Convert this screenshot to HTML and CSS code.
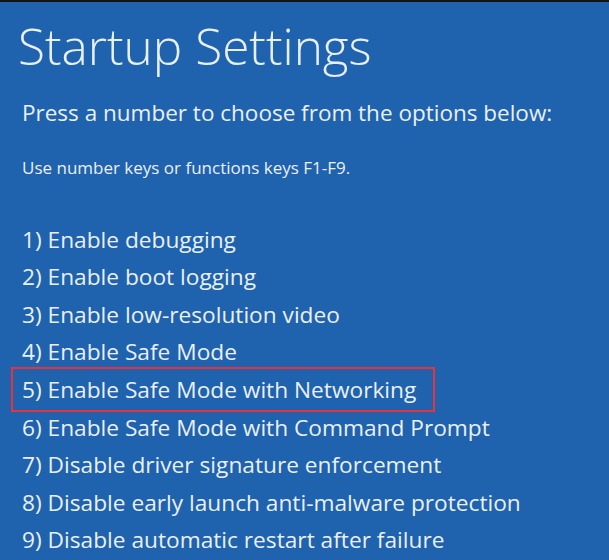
FILE: index.html
```html
<!DOCTYPE html>
<html lang="en">
<head>
    <meta charset="UTF-8">
    <title>Startup Settings</title>
    <link rel="stylesheet" href="styles.css">
</head>
<body>
    <div class="screen">
        <h1>Startup Settings</h1>

        <p class="intro">Press a number to choose from the options below:</p>
        <p class="hint">Use number keys or functions keys F1-F9.</p>

        <ul class="opciones">
            <li>1) Enable debugging</li>
            <li>2) Enable boot logging</li>
            <li>3) Enable low-resolution video</li>
            <li>4) Enable Safe Mode</li>
            <li class="marcada">5) Enable Safe Mode with Networking</li>
            <li>6) Enable Safe Mode with Command Prompt</li>
            <li>7) Disable driver signature enforcement</li>
            <li>8) Disable early launch anti-malware protection</li>
            <li>9) Disable automatic restart after failure</li>
        </ul>
    </div>
</body>
</html>
```

FILE: styles.css
```css
html, body {
    margin: 0;
    height: 100%;
}
body {
    font-family: "Open Sans", "Noto Sans", sans-serif;
    background-color: #1f62ad;
    border-top: 2px solid #141414;
    box-sizing: border-box;
    color: #eaf0f9;
    overflow: hidden;
}
.screen {
    padding: 0 0 0 22px;
}
h1 {
    font-weight: 300;
    font-size: 49.5px;
    line-height: 60px;
    margin: 14px 0 0 -4px;
}
.intro {
    font-size: 22.5px;
    line-height: 30px;
    margin: 22px 0 0;
}
.hint {
    font-size: 17px;
    line-height: 22px;
    margin: 28.6px 0 0;
}
.opciones {
    list-style: none;
    padding: 0;
    margin: 42px 0 0;
}
.opciones li {
    font-size: 22.7px;
    line-height: 37.6px;
}
/* recuadro rojo sobre la opcion 5 */
.marcada {
    position: relative;
}
.marcada::before {
    content: "";
    position: absolute;
    top: -4px;
    bottom: -3px;
    left: -11px;
    width: 420px;
    border: 2px solid #e8323c;
}
```
